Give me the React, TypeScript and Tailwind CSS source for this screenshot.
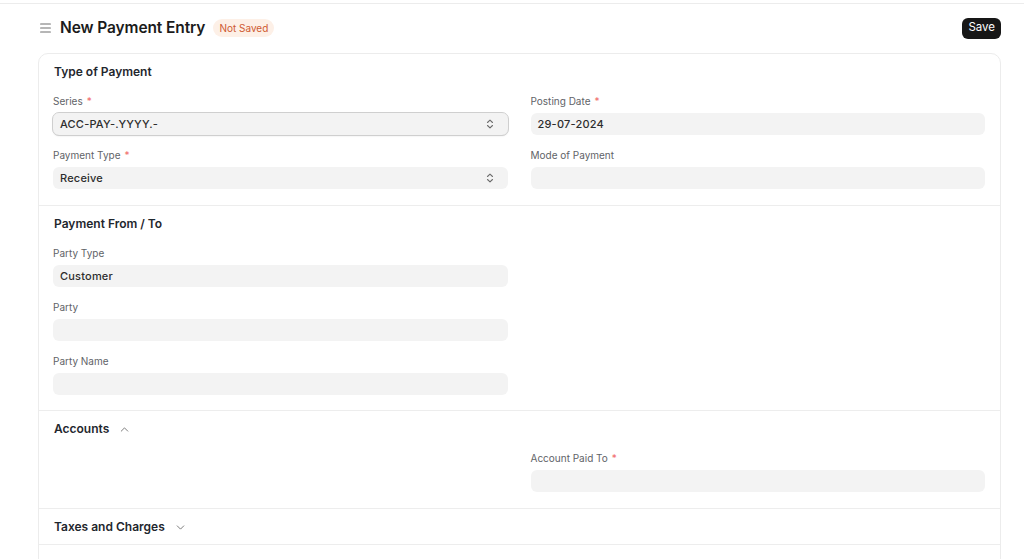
import { ChevronDown, ChevronUp } from "lucide-react";

const font = { fontFamily: "Inter, 'Noto Sans', sans-serif" };

function UpDown() {
  return (
    <svg width="8" height="10" viewBox="0 0 8 10" fill="none" stroke="#6b6b6b" strokeWidth="1.1" strokeLinecap="round" strokeLinejoin="round">
      <path d="M1.5 3.5 4 1.2l2.5 2.3" />
      <path d="M1.5 6.5 4 8.8l2.5-2.3" />
    </svg>
  );
}

function Field({
  label,
  value,
  required,
  select,
  focused,
}: {
  label: string;
  value?: string;
  required?: boolean;
  select?: boolean;
  focused?: boolean;
}) {
  return (
    <div className="flex flex-col">
      <div className="h-4 text-[10px] leading-4 text-[#5f6367]">
        {label}
        {required && <span className="ml-1 text-[#f06a6a]">*</span>}
      </div>
      <div
        className={
          "mt-1 flex h-[22px] items-center justify-between rounded-[6px] bg-[#f3f3f3] px-[7px] text-[11px] font-medium text-[#2d2d2d] " +
          (focused ? "outline outline-1 outline-[#cfcfcf] shadow-[0_1px_2px_rgba(0,0,0,0.12)]" : "")
        }
      >
        <span className="tracking-[0.2px]">{value}</span>
        {select && (
          <span className="mr-[7px]">
            <UpDown />
          </span>
        )}
      </div>
    </div>
  );
}

function Section({
  title,
  children,
  icon,
  tight,
}: {
  title: string;
  children?: React.ReactNode;
  icon?: "up" | "down";
  tight?: boolean;
}) {
  const pb = !children ? "pb-[9px]" : tight ? "pb-[15px]" : "pb-4";
  return (
    <div className={"border-b border-[#ededed] px-[14px] pt-[10px] " + pb}>
      <div className="flex h-4 items-center gap-[9px] pl-px text-[12px] font-semibold leading-4 text-[#1f272e]">
        {title}
        {icon === "up" && <ChevronUp size={13} strokeWidth={1.4} className="text-[#555]" />}
        {icon === "down" && <ChevronDown size={13} strokeWidth={1.4} className="text-[#555]" />}
      </div>
      {children && <div className="mt-[13px] grid grid-cols-2 gap-x-[23px] pr-px">{children}</div>}
    </div>
  );
}

export default function App() {
  return (
    <div style={font} className="h-[559px] overflow-hidden bg-white">
      <div className="h-[4px] border-b border-[#ececec]" />
      <div className="flex h-[47px] items-center justify-between pl-[40px] pr-[23px] pt-px">
        <div className="flex items-center">
          <svg width="11" height="10" viewBox="0 0 11 10" stroke="#6e6e6e" strokeWidth="1.1" strokeLinecap="round">
            <path d="M0.6 1h9.8M0.6 5h9.8M0.6 9h9.8" />
          </svg>
          <h1 className="ml-[9px] text-[15.5px] font-semibold tracking-[-0.1px] text-[#1b1b1b]">New Payment Entry</h1>
          <span className="ml-[8px] rounded-full bg-[#fdf0e7] px-[6px] py-[2px] text-[10px] leading-[14px] text-[#cf5a32]">
            Not Saved
          </span>
        </div>
        <button className="h-[21px] rounded-[6px] bg-[#171717] px-[6px] text-[11.5px] text-white">Save</button>
      </div>
      <div className="ml-[38px] mr-[23px] mt-[2px] rounded-t-[10px] border border-[#ececec]">
        <Section title="Type of Payment">
          <div className="flex flex-col gap-3">
            <Field label="Series" required value="ACC-PAY-.YYYY.-" select focused />
            <Field label="Payment Type" required value="Receive" select />
          </div>
          <div className="flex flex-col gap-3">
            <Field label="Posting Date" required value="29-07-2024" />
            <Field label="Mode of Payment" />
          </div>
        </Section>
        <Section title="Payment From / To" tight>
          <div className="flex flex-col gap-3">
            <Field label="Party Type" value="Customer" />
            <Field label="Party" />
            <Field label="Party Name" />
          </div>
          <div />
        </Section>
        <Section title="Accounts" icon="up">
          <div />
          <div className="flex flex-col gap-3">
            <Field label="Account Paid To" required />
          </div>
        </Section>
        <Section title="Taxes and Charges" icon="down" />
        <div className="h-[40px]" />
      </div>
    </div>
  );
}
